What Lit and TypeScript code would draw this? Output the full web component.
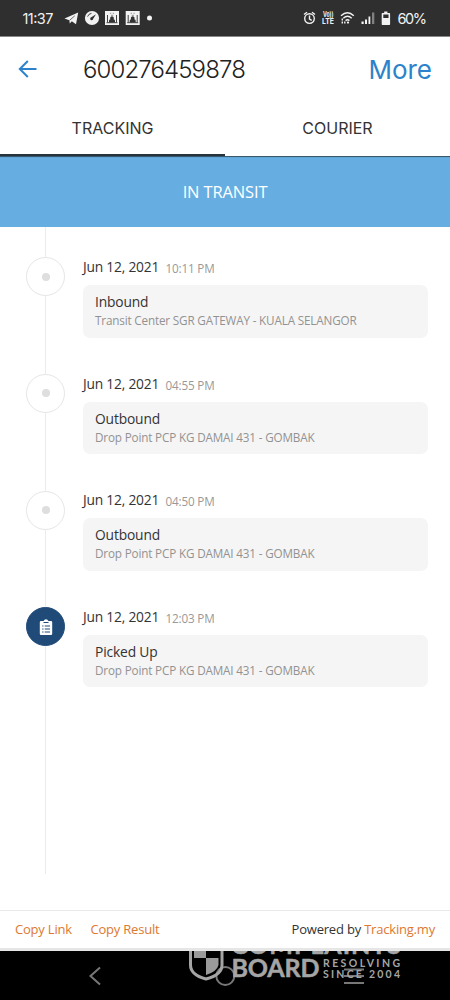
import { LitElement, html, css, svg } from "lit";
import { customElement, property } from "lit/decorators.js";

interface TrackEvent {
  date: string;
  time: string;
  title: string;
  place: string;
  picked?: boolean;
}

const EVENTS: TrackEvent[] = [
  { date: "Jun 12, 2021", time: "10:11 PM", title: "Inbound", place: "Transit Center SGR GATEWAY - KUALA SELANGOR" },
  { date: "Jun 12, 2021", time: "04:55 PM", title: "Outbound", place: "Drop Point PCP KG DAMAI 431 - GOMBAK" },
  { date: "Jun 12, 2021", time: "04:50 PM", title: "Outbound", place: "Drop Point PCP KG DAMAI 431 - GOMBAK" },
  { date: "Jun 12, 2021", time: "12:03 PM", title: "Picked Up", place: "Drop Point PCP KG DAMAI 431 - GOMBAK", picked: true },
];

const photo = (x: number) => svg`
  <g transform="translate(${x} 11)">
    <path d="M0 0H14V14H0Z" fill="#f2f2f2"/>
    <path d="M2.500 4V11.500M11.500 4V11.500M1.500 11.700H12.500" stroke="#444" stroke-width="1" fill="none"/>
    <path d="M5 2.300H6.200M7.800 2.300H9M6 4.300H8.200" stroke="#777" stroke-width=".8" fill="none"/>
    <path d="M4 11.500V9.800Q4 8.600 5.400 8.300A1.900 1.900 0 1 1 8.600 8.300Q10 8.600 10 9.800V11.500Z" fill="#333"/>
  </g>`;

@customElement("status-bar")
class StatusBar extends LitElement {
  static styles = css`
    :host { display: block; height: 36px; background: #2f2f2f; }
    svg { display: block; }
    text { font-family: Inter, "Open Sans", sans-serif; fill: #f2f2f2; }
    .clock { font-size: 14.5px; }
    .volte { font-size: 7.5px; font-weight: 700; }
  `;
  render() {
    return html`<svg width="450" height="36" viewBox="0 0 450 36">
      <text class="clock" x="22.5" y="24" textLength="31">11:37</text>
      <path d="M64.500 18.600L78.200 12.600L76 24.300L71.800 21.300L69.800 23.600L69.300 20.200Z" fill="#f2f2f2"/>
      <path d="M69.600 20.300L74.800 15.800" stroke="#2f2f2f" stroke-width=".7"/>
      <circle cx="92" cy="18" r="7.100" fill="#f2f2f2"/>
      <path d="M87.600 16.600A4.800 4.800 0 0 1 91.500 13.300" fill="none" stroke="#444" stroke-width="1"/>
      <path d="M96 14.200L93.200 18.800A1.500 1.500 0 1 1 91.300 17.300Z" fill="#2f2f2f"/>
      ${photo(105)}${photo(125.7)}
      <circle cx="149.500" cy="18" r="2.500" fill="#f2f2f2"/>
      <g fill="none" stroke="#f2f2f2" stroke-width="1.400">
        <circle cx="309.500" cy="18.600" r="4.800"/>
        <path d="M309.500 15.500V19L311.700 20.300M304 14.500L307 12.200M315 14.500L312 12.200"/>
        <path d="M341 15.800Q347.500 9.800 353.800 15.800M343.300 18.300Q347.500 14.400 351.700 18.300"/>
        <path d="M345.600 20.600Q347.500 19 349.400 20.600"/>
        <path d="M342.300 18.500V23.500M344.800 21.500V23.500" stroke-dasharray="2 1"/>
      </g>
      <circle cx="348" cy="22.600" r="1.100" fill="#f2f2f2"/>
      <text class="volte" x="323" y="17.200" textLength="10.500" lengthAdjust="spacingAndGlyphs">Vo))</text>
      <text class="volte" x="322" y="24" textLength="12" lengthAdjust="spacingAndGlyphs">LTE</text>
      <g fill="#f2f2f2">
        <path d="M361.500 21.500h2.200V24h-2.200ZM365 19.500h2V24h-2ZM368.500 16.500h1.800V24h-1.800Z"/>
        <path d="M372 12.500h2.300V24H372Z" opacity=".42"/>
        <path fill-rule="evenodd" d="M384.200 11.600h3.200v1.400h2q.7 0 .7.7V24.300q0 .7-.7.7h-7q-.7 0-.7-.7V13.700q0-.7.7-.7h1.800ZM383.300 14.600V18h5.200V14.600Z"/>
      </g>
      <text class="clock" x="397.500" y="24" textLength="29.500">60%</text>
    </svg>`;
  }
}

@customElement("track-event")
class TrackEventRow extends LitElement {
  @property({ attribute: false }) event!: TrackEvent;
  static styles = css`
    :host { display: flex; gap: 18px; height: 116.6px; box-sizing: border-box; padding-left: 26px; }
    .dot { box-sizing: border-box; flex: none; width: 39px; height: 39px; margin-top: 30.400px; border-radius: 50%;
      border: 1px solid #e6e6e6; background: #fff; display: grid; place-items: center; }
    .dot::after { content: ""; width: 8px; height: 8px; border-radius: 50%; background: #dedede; }
    .picked { background: #204a78; border-color: #204a78; }
    .picked::after { display: none; }
    .body { width: 345px; padding-top: 30.300px; }
    .when { height: 27.800px; line-height: 20px; white-space: nowrap; display: flex; gap: 6.500px; }
    .date { font-size: 13.800px; letter-spacing: -0.220px; color: #333; }
    .time { font-size: 11.700px; letter-spacing: -0.180px; color: #999; padding-top: 1px; }
    .card { box-sizing: border-box; height: 52.500px; border-radius: 7px; background: #f5f5f5; padding: 7px 12px 0; white-space: nowrap; }
    .title { font-size: 13.800px; letter-spacing: -0.150px; line-height: 20px; color: #333; }
    .place { font-size: 11.700px; letter-spacing: -0.160px; line-height: 17px; color: #929292; }
  `;
  render() {
    const e = this.event;
    return html`
      <div class="dot ${e.picked ? "picked" : ""}">
        ${e.picked
          ? html`<svg width="14" height="18" viewBox="0 0 14 18">
              <path fill="#fff" d="M2 3H4.700A2.400 2.400 0 0 1 9.300 3H12Q13.200 3 13.200 4.200V15.800Q13.200 17 12 17H2Q.8 17 .8 15.800V4.200Q.8 3 2 3Z"/>
              <path d="M4.500 4.500H9.500M3.200 8H4.500M5.700 8H11M3.200 11H4.500M5.700 11H11M3.200 14H4.500M5.700 14H11" stroke="#204a78" stroke-width="1.200"/>
            </svg>`
          : ""}
      </div>
      <div class="body">
        <div class="when"><span class="date">${e.date}</span><span class="time">${e.time}</span></div>
        <div class="card"><div class="title">${e.title}</div><div class="place">${e.place}</div></div>
      </div>`;
  }
}

@customElement("nav-bar")
class NavBar extends LitElement {
  static styles = css`
    :host { display: block; height: 49px; background: #000; }
    svg { display: block; }
    text { font-family: Lato, sans-serif; fill: #a5a5a5; }
    .big { font-size: 25px; font-weight: 700; stroke: #a5a5a5; stroke-width: .5px; }
    .small { font-size: 10.500px; font-weight: 700; }
  `;
  render() {
    return html`<svg width="450" height="49" viewBox="0 951 450 49">
      <path d="M100 967.500L90.500 976L100 984.500" fill="none" stroke="#777" stroke-width="2"/>
      <circle cx="225.300" cy="976" r="9" fill="none" stroke="#777" stroke-width="2"/>
      <path d="M344 969.500H364M344 976H364M344 983H364" stroke="#777" stroke-width="2"/>
      <path d="M190.500 945V965Q190.500 975 206 979Q222 975 222 965V945" fill="none" stroke="#a5a5a5" stroke-width="3"/>
      <path d="M194 945H206V958H194ZM206 958H218.500V965Q217 971.500 206 975Z" fill="#9a9a9a"/>
      <text class="big" x="231" y="954" textLength="170">COMPLAINTS</text>
      <text class="big" x="231.500" y="977" textLength="88">BOARD</text>
      <text class="small" x="323" y="967" textLength="77">RESOLVING</text>
      <text class="small" x="323" y="977.500" textLength="77">SINCE 2004</text>
    </svg>`;
  }
}

@customElement("app-root")
class AppRoot extends LitElement {
  static styles = css`
    :host { display: flex; flex-direction: column; width: 450px; height: 1000px; overflow: hidden; background: #fff;
      font-family: "Open Sans", "Noto Sans", sans-serif; color: #333; }
    .header { height: 64px; display: flex; align-items: center; border-top: 1px solid #888; box-sizing: border-box;
      padding: 1px 18px 0; font-family: Inter, sans-serif; }
    .back { width: 65px; flex: none; display: flex; }
    .number { flex: 1; font-size: 24px; font-weight: 300; color: #222; letter-spacing: -0.880px; }
    .more { font-size: 26px; color: #2d83cb; }
    .tabs { display: grid; grid-template-columns: 1fr 1fr; height: 56px; box-sizing: border-box;
      font-family: Inter, sans-serif; font-size: 16px; text-align: center; line-height: 56px; }
    .tab { height: 56px; border-bottom: 2px solid transparent; box-sizing: border-box; }
    .active { border-bottom-color: #26323c; }
    .banner { height: 71px; line-height: 72px; text-align: center; background: #66aee1; color: #fff; font-size: 16.500px;
      letter-spacing: -0.150px; box-shadow: inset 0 2px 1px -1px #344f64; }
    .timeline { height: 683px; box-sizing: border-box;
      background: linear-gradient(#ececec, #ececec) 44.500px 0 / 1px 647px no-repeat; }
    .footer { height: 37px; border-top: 1px solid #e9e9e9; border-bottom: 3px solid #e6e6e6;
      display: flex; padding: 0 15px; font-size: 13px; letter-spacing: -0.200px; line-height: 37px; white-space: nowrap; }
    .link { color: #dc7831; margin-right: 18.500px; }
    .powered { margin-left: auto; }
    .brand { color: #dc7831; }
  `;
  render() {
    return html`
      <status-bar></status-bar>
      <div class="header">
        <span class="back"><svg width="20" height="20" viewBox="0 0 20 20"><path d="M18.500 10H2M9.800 2L1.800 10L9.800 18" fill="none" stroke="#2d83cb" stroke-width="2"/></svg></span>
        <span class="number">600276459878</span>
        <span class="more">More</span>
      </div>
      <div class="tabs"><div class="tab active">TRACKING</div><div class="tab">COURIER</div></div>
      <div class="banner">IN TRANSIT</div>
      <div class="timeline">${EVENTS.map((e) => html`<track-event .event=${e}></track-event>`)}</div>
      <div class="footer">
        <span class="link">Copy Link</span><span class="link">Copy Result</span>
        <span class="powered">Powered by <span class="brand">Tracking.my</span></span>
      </div>
      <nav-bar></nav-bar>`;
  }
}
